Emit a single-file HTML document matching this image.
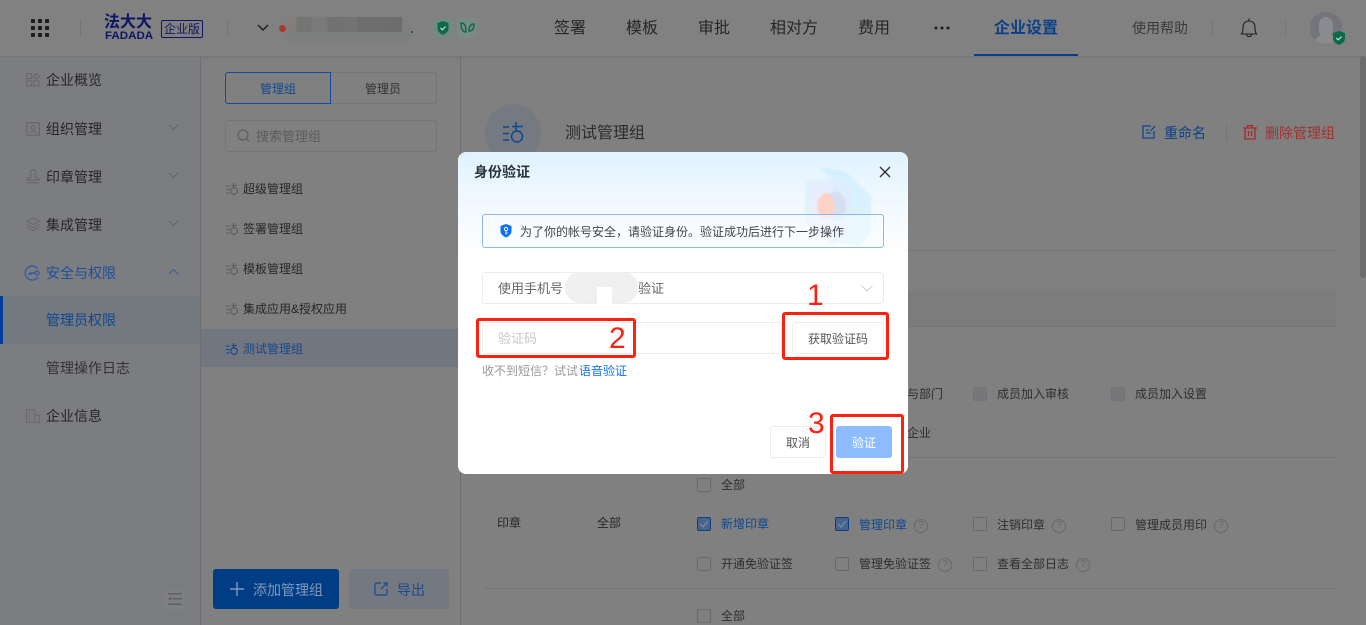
<!DOCTYPE html>
<html lang="zh"><head><meta charset="utf-8"><title>身份验证</title>
<style>
html,body{margin:0;padding:0;width:1366px;height:625px;overflow:hidden;background:#808080}
body{position:relative;font-family:"Liberation Sans","Noto Sans CJK SC",sans-serif;color:#262626}
.t{position:absolute;white-space:nowrap;line-height:20px;height:20px}
.b{position:absolute;box-sizing:border-box}
svg{position:absolute;overflow:visible}
.f14{font-size:14px}.f12{font-size:12px}.f13{font-size:13px}.f16{font-size:16px}
.blue{color:#0b3f8c}
.cb{position:absolute;box-sizing:border-box;width:14px;height:14px;border:1px solid #6a6a6a;border-radius:2px}
.cb.on{background:#4a638a;border-color:#0e3f86}
.cb.dis{background:#76777a;border-color:#737476}
.q{position:absolute;box-sizing:border-box;width:14px;height:14px;border:1px solid #696969;border-radius:50%;color:#666;font-size:10px;line-height:12px;text-align:center}
.red{position:absolute;box-sizing:border-box;border:3px solid #ff2010;border-radius:3px}
.num{position:absolute;color:#ff2010;font-size:30px;line-height:30px;font-family:"Liberation Sans",sans-serif}
</style></head><body>

<!-- header -->
<div class="b" style="left:0;top:0;width:1366px;height:56px;background:#818181;box-shadow:0 1px 3px rgba(0,0,0,.12)"></div>
<svg style="left:31px;top:19px" width="18" height="18" fill="#1d1d1d">
<rect width="4" height="4" rx=".6"/><rect x="7" width="4" height="4" rx=".6"/><rect x="14" width="4" height="4" rx=".6"/>
<rect y="7" width="4" height="4" rx=".6"/><rect x="7" y="7" width="4" height="4" rx=".6"/><rect x="14" y="7" width="4" height="4" rx=".6"/>
<rect y="14" width="4" height="4" rx=".6"/><rect x="7" y="14" width="4" height="4" rx=".6"/><rect x="14" y="14" width="4" height="4" rx=".6"/></svg>
<div class="b" style="left:80px;top:20px;width:1px;height:16px;background:#747474"></div>
<div class="t" style="left:104px;top:14px;font-size:16px;line-height:17px;height:17px;font-weight:700;color:#0c1566">法大大</div>
<div class="t" style="left:105px;top:31px;font-size:11px;line-height:10px;height:10px;font-weight:700;color:#0c1566;transform-origin:0 0;transform:scaleX(1.05)">FADADA</div>
<div class="b" style="left:161px;top:20px;width:42px;height:18px;border:1px solid #0c1566;border-radius:2px"></div>
<div class="t f12" style="left:164px;top:19px;color:#10185e">企业版</div>
<div class="b" style="left:227px;top:20px;width:1px;height:16px;background:#747474"></div>
<svg style="left:257px;top:24px" width="12" height="8" fill="none" stroke="#1d1d1d" stroke-width="1.4"><path d="M1 1l5 5 5-5"/></svg>
<div class="b" style="left:285px;top:16px;width:126px;height:30px;border-radius:15px;background:#7d807e"></div>
<div class="b" style="left:286px;top:17px;width:116px;height:15px;background:linear-gradient(90deg,#837d7b 0,#837d7b 10px,#747474 11px,#747474 25px,#7a7a7a 26px,#7a7a7a 41px,#717171 42px,#737373 70px,#6e6e6e 72px,#6d6d6d 116px);border-radius:6px 0 0 0"></div>
<div class="b" style="left:279px;top:25px;width:7px;height:7px;border-radius:50%;background:#a83a30"></div>
<div class="b" style="left:411px;top:31px;width:2px;height:2px;background:#33507a"></div>
<div class="b" style="left:432px;top:18px;width:21px;height:20px;border-radius:4px;background:#74897f"></div>
<svg style="left:437px;top:20px" width="12" height="16"><path d="M6 1l5.500 2v5.500c0 3-2.500 5-5.500 6.500C3 13.500.5 11.500.5 8.500V3z" fill="#0a6b4b"/><path d="M3.500 8l2 1.800 3-3.300" stroke="#c8dcd4" stroke-width="1.200" fill="none"/></svg>
<div class="b" style="left:457px;top:18px;width:20px;height:20px;border-radius:4px;background:#7a8a84"></div>
<svg style="left:460px;top:22px" width="15" height="12" fill="none" stroke="#0a6b4b" stroke-width="1.400"><path d="M1 1c4 0 5 3 5 9C3 10 1 7 1 1zM14 2c-3 0-5 2-5 7 3 0 5-2 5-7z"/></svg>

<div class="t f16" style="left:554px;top:19px">签署</div>
<div class="t f16" style="left:626px;top:19px">模板</div>
<div class="t f16" style="left:698px;top:19px">审批</div>
<div class="t f16" style="left:770px;top:19px">相对方</div>
<div class="t f16" style="left:858px;top:19px">费用</div>
<svg style="left:934px;top:26px" width="16" height="4" fill="#1d1d1d"><circle cx="2" cy="2" r="1.500"/><circle cx="8" cy="2" r="1.500"/><circle cx="14" cy="2" r="1.500"/></svg>
<div class="t f16 blue" style="left:994px;top:19px;font-weight:700">企业设置</div>
<div class="b" style="left:974px;top:54px;width:104px;height:2px;background:#003f8f"></div>
<div class="t f14" style="left:1132px;top:18px;color:#3a3a3a">使用帮助</div>
<div class="b" style="left:1212px;top:20px;width:1px;height:16px;background:#747474"></div>
<svg style="left:1240px;top:18px" width="18" height="21" fill="none" stroke="#1e1e1e" stroke-width="1.100"><path d="M9 .5v2.500M1.500 16c1.200-1.500 1.500-3 1.500-6.500C3 5.500 5.500 3 9 3s6 2.500 6 6.500c0 3.500.3 5 1.500 6.500z"/><path d="M6.500 16c0 3.500 5 3.500 5 0"/></svg>
<div class="b" style="left:1285px;top:20px;width:1px;height:16px;background:#767676"></div>
<div class="b" style="left:1310px;top:12px;width:32px;height:32px;border-radius:50%;background:#73747c;overflow:hidden">
<div class="b" style="left:9px;top:5px;width:14px;height:20px;border-radius:7px;background:#8a8b8e"></div>
<div class="b" style="left:3px;top:22px;width:26px;height:14px;border-radius:13px 13px 0 0;background:#8a8b8e"></div></div>
<svg style="left:1333px;top:31px" width="12" height="14"><path d="M6 0l6 2v5.500c0 3-2.500 5-6 6.500-3.500-1.500-6-3.500-6-6.500V2z" fill="#0a6b4b"/><path d="M3.300 7l2 1.800 3.300-3.300" stroke="#c8dcd4" stroke-width="1.200" fill="none"/></svg>

<!-- sidebar -->
<div class="b" style="left:0;top:57px;width:200px;height:568px;background:#7c7d80"></div>
<div class="b" style="left:200px;top:57px;width:1px;height:568px;background:#6e6e6e"></div>
<div class="b" style="left:460px;top:57px;width:1px;height:568px;background:#6e6e6e"></div>
<div class="b" style="left:0;top:296px;width:200px;height:48px;background:#74787f"></div>
<div class="b" style="left:0;top:296px;width:3px;height:48px;background:#003f99"></div>

<svg style="left:26px;top:73px" width="14" height="14" fill="none" stroke="#6a6a6a" stroke-width="1.300"><rect x=".7" y=".7" width="5" height="5"/><rect x=".7" y="8" width="5" height="5"/><rect x="8" y="8" width="5" height="5"/><path d="M10.500.7l2.700 2.700-2.700 2.700-2.700-2.700z"/></svg>
<div class="t f14" style="left:46px;top:70px">企业概览</div>
<svg style="left:26px;top:122px" width="14" height="14" fill="none" stroke="#6a6a6a" stroke-width="1.300"><rect x=".7" y=".7" width="12.600" height="12.600"/><circle cx="7" cy="5.500" r="2"/><path d="M3.500 11c.8-2 6.200-2 7 0"/></svg>
<div class="t f14" style="left:46px;top:119px">组织管理</div>
<svg style="left:168px;top:124px" width="11" height="7" fill="none" stroke="#656565" stroke-width="1"><path d="M1 1l4.500 4.500L10 1"/></svg>
<svg style="left:26px;top:169px" width="14" height="15" fill="none" stroke="#6a6a6a" stroke-width="1.200"><path d="M7 1c2.300 0 3 1.800 2.700 3.500-.2 1.300-1 2-1 3.300 0 1.200 4.600 1 4.600 3.200H.7c0-2.200 4.600-2 4.600-3.200 0-1.300-.8-2-1-3.300C4 2.800 4.700 1 7 1zM.7 13.800h12.600"/></svg>
<div class="t f14" style="left:46px;top:167px">印章管理</div>
<svg style="left:168px;top:172px" width="11" height="7" fill="none" stroke="#656565" stroke-width="1"><path d="M1 1l4.500 4.500L10 1"/></svg>
<svg style="left:26px;top:217px" width="14" height="15" fill="none" stroke="#6a6a6a" stroke-width="1.100"><path d="M7 1l6.300 3.300L7 7.600.7 4.300zM.7 7.300L7 10.600l6.300-3.300M.7 10.300L7 13.600l6.300-3.300"/></svg>
<div class="t f14" style="left:46px;top:215px">集成管理</div>
<svg style="left:168px;top:220px" width="11" height="7" fill="none" stroke="#656565" stroke-width="1"><path d="M1 1l4.500 4.500L10 1"/></svg>
<svg style="left:25px;top:265px" width="16" height="16" fill="none" stroke="#2d5ea5" stroke-width="1.300"><path d="M12.500 3.500A7 7 0 1 0 13 12"/><circle cx="12" cy="8" r="2"/><path d="M10 8H4M6 8v2M4 8v2" stroke-width="1.500"/></svg>
<div class="t f14" style="left:46px;top:263px;color:#1c4f9c">安全与权限</div>
<svg style="left:168px;top:268px" width="11" height="7" fill="none" stroke="#2d5ea5" stroke-width="1"><path d="M1 6l4.500-4.500L10 6"/></svg>
<div class="t f14" style="left:46px;top:310px;color:#0f478f">管理员权限</div>
<div class="t f14" style="left:46px;top:358px;color:#333">管理操作日志</div>
<svg style="left:26px;top:409px" width="14" height="14" fill="none" stroke="#6a6a6a" stroke-width="1.200"><path d="M.7 13.300V.7h8v12.600zM8.700 6h4.600v7.300H8.700"/><path d="M3 4h1M5.500 4h1M3 7h1M5.500 7h1M3 10h1M5.500 10h1"/></svg>
<div class="t f14" style="left:46px;top:406px">企业信息</div>
<div class="b" style="left:165px;top:590px;width:20px;height:20px;background:#7e7f81"></div>
<svg style="left:168px;top:593px" width="14" height="13" fill="#606060"><rect x="0" y="0" width="14" height="1.500"/><rect x="5" y="5" width="9" height="1.500"/><rect x="0" y="10.500" width="14" height="1.500"/><path d="M0 5.800L3.500 3.500v4.600z"/></svg>

<!-- middle column -->
<div class="b" style="left:331px;top:72px;width:106px;height:32px;border:1px solid #747474;border-left:0;border-radius:0 3px 3px 0"></div>
<div class="b" style="left:225px;top:72px;width:106px;height:32px;border:1px solid #0f4c9c;border-radius:3px 0 0 3px"></div>
<div class="t f12" style="left:260px;top:79px;color:#11488f">管理组</div>
<div class="t f12" style="left:365px;top:79px;color:#333">管理员</div>
<div class="b" style="left:225px;top:120px;width:212px;height:32px;border:1px solid #747474;border-radius:3px"></div>
<svg style="left:237px;top:129px" width="13" height="14" fill="none" stroke="#5a5a5a" stroke-width="1"><circle cx="6" cy="6" r="5"/><path d="M9.500 9.500L12 12.500"/></svg>
<div class="t f13" style="left:256px;top:127px;color:#5c5c5c">搜索管理组</div>

<div class="b" style="left:201px;top:329px;width:259px;height:38px;background:#72767f"></div>
<svg width="0" height="0" style="position:absolute"><defs>
<symbol id="g" viewBox="0 0 12 12"><path d="M0 3h3.500M0 6.500h3.500M0 10h3.500M7.500 0v5M5.500 2.500H11" fill="none" stroke="currentColor" stroke-width="1.100"/><circle cx="8" cy="8" r="3.300" fill="none" stroke="currentColor" stroke-width="1.100"/></symbol></defs></svg>
<svg style="left:226px;top:183px;color:#5a5a5a" width="12" height="12"><use href="#g"/></svg>
<div class="t f12" style="left:243px;top:179px">超级管理组</div>
<svg style="left:226px;top:223px;color:#5a5a5a" width="12" height="12"><use href="#g"/></svg>
<div class="t f12" style="left:243px;top:219px">签署管理组</div>
<svg style="left:226px;top:263px;color:#5a5a5a" width="12" height="12"><use href="#g"/></svg>
<div class="t f12" style="left:243px;top:259px">模板管理组</div>
<svg style="left:226px;top:303px;color:#5a5a5a" width="12" height="12"><use href="#g"/></svg>
<div class="t f12" style="left:243px;top:299px">集成应用&amp;授权应用</div>
<svg style="left:226px;top:343px;color:#0f478f" width="12" height="12"><use href="#g"/></svg>
<div class="t f12" style="left:243px;top:339px;color:#15488f">测试管理组</div>

<div class="b" style="left:213px;top:569px;width:126px;height:40px;background:#003d85;border-radius:3px"></div>
<svg style="left:230px;top:582px" width="14" height="14" stroke="#8099bb" stroke-width="1.400"><path d="M7 0v14M0 7h14"/></svg>
<div class="t f14" style="left:253px;top:580px;color:#8099bb">添加管理组</div>
<div class="b" style="left:349px;top:569px;width:100px;height:40px;background:#747880;border-radius:3px"></div>
<svg style="left:374px;top:582px" width="14" height="14" fill="none" stroke="#21508f" stroke-width="1.400"><path d="M7 1H2.500A1.500 1.500 0 0 0 1 2.500v9A1.500 1.500 0 0 0 2.500 13h9a1.500 1.500 0 0 0 1.500-1.500V7M7 7l6-6M9.500 1H13v3.500"/></svg>
<div class="t f14" style="left:397px;top:580px;color:#1d4a8c">导出</div>

<!-- right content -->
<div class="b" style="left:485px;top:104px;width:56px;height:58px;border-radius:50%;background:#757a82"></div>
<svg style="left:503px;top:122px" width="21" height="22" fill="none" stroke="#0f478f" stroke-width="1.500"><path d="M0 5h6M0 11.500h6M0 18h6M13 0v9M9 4.500h11"/><circle cx="14" cy="14.500" r="5.500"/></svg>
<div class="t f16" style="left:565px;top:124px;color:#2b2b2b">测试管理组</div>
<svg style="left:1142px;top:125px" width="14" height="14" fill="none" stroke="#0f478f" stroke-width="1.300"><path d="M9 1H1v12h11V6M4 5h3M4 8h5M13 1L8.500 6"/></svg>
<div class="t f14 blue" style="left:1164px;top:123px">重命名</div>
<div class="b" style="left:1226px;top:125px;width:1px;height:16px;background:#737373"></div>
<svg style="left:1243px;top:125px" width="14" height="15" fill="none" stroke="#a52a2a" stroke-width="1.300"><path d="M0 3h14M4.500 3V.7h5V3M2 3v11h10V3M5.500 6v5M8.500 6v5"/></svg>
<div class="t f14" style="left:1265px;top:123px;color:#a23030">删除管理组</div>

<div class="b" style="left:484px;top:250px;width:852px;height:1px;background:#757575"></div>
<div class="b" style="left:484px;top:291px;width:852px;height:36px;background:#7c7c7c;border-bottom:1px solid #767676"></div>
<div class="b" style="left:484px;top:457px;width:852px;height:1px;background:#757575"></div>
<div class="b" style="left:484px;top:588px;width:852px;height:1px;background:#757575"></div>

<div class="t f12" style="left:907px;top:384px;color:#2e2e2e">与部门</div>
<div class="cb dis" style="left:973px;top:387px"></div>
<div class="t f12" style="left:997px;top:384px;color:#2e2e2e">成员加入审核</div>
<div class="cb dis" style="left:1111px;top:387px"></div>
<div class="t f12" style="left:1135px;top:384px;color:#2e2e2e">成员加入设置</div>
<div class="t f12" style="left:907px;top:423px;color:#2e2e2e">企业</div>

<div class="cb" style="left:697px;top:478px"></div><div class="t f12" style="left:721px;top:475px;color:#2e2e2e">全部</div>
<div class="t f12" style="left:497px;top:513px">印章</div>
<div class="t f12" style="left:597px;top:513px">全部</div>
<div class="cb on" style="left:697px;top:517px"></div>
<svg style="left:700px;top:520px" width="8" height="8" fill="none" stroke="#7f92ad" stroke-width="1"><path d="M0 4l3 3 5-6"/></svg>
<div class="t f12" style="left:721px;top:514px;color:#0f478f">新增印章</div>
<div class="cb on" style="left:835px;top:517px"></div>
<svg style="left:838px;top:520px" width="8" height="8" fill="none" stroke="#7f92ad" stroke-width="1"><path d="M0 4l3 3 5-6"/></svg>
<div class="t f12" style="left:859px;top:515px;color:#0f478f">管理印章</div>
<div class="q" style="left:914px;top:519px">?</div>
<div class="cb" style="left:973px;top:517px"></div><div class="t f12" style="left:997px;top:515px;color:#2e2e2e">注销印章</div>
<div class="q" style="left:1052px;top:519px">?</div>
<div class="cb" style="left:1111px;top:517px"></div><div class="t f12" style="left:1135px;top:515px;color:#2e2e2e">管理成员用印</div>
<div class="q" style="left:1214px;top:519px">?</div>

<div class="cb" style="left:697px;top:557px"></div><div class="t f12" style="left:721px;top:554px;color:#2e2e2e">开通免验证签</div>
<div class="cb" style="left:835px;top:557px"></div><div class="t f12" style="left:859px;top:554px;color:#2e2e2e">管理免验证签</div>
<div class="q" style="left:938px;top:558px">?</div>
<div class="cb" style="left:973px;top:557px"></div><div class="t f12" style="left:997px;top:554px;color:#2e2e2e">查看全部日志</div>
<div class="q" style="left:1076px;top:558px">?</div>
<div class="cb" style="left:697px;top:609px"></div><div class="t f12" style="left:721px;top:606px;color:#2e2e2e">全部</div>

<div class="b" style="left:1360px;top:56px;width:6px;height:222px;background:#6c6c6c;border-radius:3px"></div>

<!-- modal -->
<div class="b" style="left:458px;top:152px;width:450px;height:322px;border-radius:8px;background:linear-gradient(180deg,#e1f3ff 0,#f2f9ff 55px,#fff 105px,#fff 100%);overflow:hidden">
<svg style="left:346px;top:12px;filter:blur(.8px)" width="70" height="85">
<path d="M14 2l28 6 25 24v36l-12 14-26-4V16z" fill="#c4ecff" opacity=".55"/>
<path d="M1 18l27-6 20 13v42L28 82 1 58z" fill="#e2e9fd" opacity=".7"/>
<path d="M1 18l27-6 2 3-25 7v35l-4 1z" fill="#dff3ff" opacity=".9"/>
<ellipse cx="22" cy="42" rx="9" ry="13" fill="#ffd2c8"/>
<path d="M25 30c8-6 17 0 17 12s-8 16-15 13c5-8 5-17-2-25z" fill="#d6deef"/>
</svg>
</div>
<div class="t f14" style="left:474px;top:162px;font-weight:700;color:#2b3240">身份验证</div>
<svg style="left:880px;top:167px" width="10" height="10" stroke="#333" stroke-width="1.400"><path d="M0 0l10 10M10 0L0 10"/></svg>

<div class="b" style="left:482px;top:214px;width:402px;height:34px;border:1px solid #8ab8f5;border-radius:3px;background:rgba(248,251,255,.55)"></div>
<svg style="left:500px;top:224px" width="12" height="14"><path d="M6 0l5.500 2v5c0 3-2.500 5.200-5.500 6.500C3 12.200.5 10 .5 7V2z" fill="#0a6ff0"/><circle cx="6" cy="5" r="1.700" fill="none" stroke="#fff"/><path d="M6 6.500v4M6 9h1.500" stroke="#fff"/></svg>
<div class="t f12" style="left:520px;top:222px;color:#444">为了你的帐号安全&#65292;请验证身份。验证成功后进行下一步操作</div>

<div class="b" style="left:482px;top:272px;width:402px;height:32px;border:1px solid #ececec;border-radius:3px"></div>
<div class="t f13" style="left:498px;top:279px;color:#666">使用手机号</div>
<div class="b" style="left:565px;top:272px;width:73px;height:31px;border-radius:15px;background:#f0f0f0"></div>
<div class="b" style="left:597px;top:287px;width:15px;height:17px;background:#fff"></div>
<div class="t f13" style="left:638px;top:279px;color:#666">验证</div>
<svg style="left:861px;top:285px" width="12" height="7" fill="none" stroke="#cfcfcf" stroke-width="1"><path d="M.5.500L6 6 11.500.500"/></svg>

<div class="b" style="left:482px;top:322px;width:300px;height:32px;border:1px solid #ececec;border-radius:3px"></div>
<div class="t f13" style="left:498px;top:329px;color:#c6c6c6">验证码</div>
<div class="b" style="left:792px;top:322px;width:92px;height:32px;border:1px solid #ececec;border-radius:3px"></div>
<div class="t f12" style="left:808px;top:329px;color:#555">获取验证码</div>
<div class="t f12" style="left:482px;top:361px;color:#999">收不到短信&#65311;试试</div>
<div class="t f12" style="left:579px;top:361px;color:#1272e8">语音验证</div>

<div class="b" style="left:770px;top:426px;width:56px;height:32px;border:1px solid #ececec;border-radius:3px;background:#fff"></div>
<div class="t f12" style="left:786px;top:433px;color:#555">取消</div>
<div class="b" style="left:836px;top:426px;width:56px;height:32px;border-radius:3px;background:#8cbcff"></div>
<div class="t f12" style="left:852px;top:433px;color:#fff">验证</div>

<!-- annotations -->
<div class="red" style="left:476px;top:318px;width:160px;height:40px"></div>
<div class="red" style="left:782px;top:312px;width:107px;height:48px"></div>
<div class="red" style="left:830px;top:414px;width:74px;height:60px"></div>
<div class="num" style="left:807px;top:281px">1</div>
<div class="num" style="left:609px;top:324px">2</div>
<div class="num" style="left:808px;top:409px">3</div>
</body></html>
